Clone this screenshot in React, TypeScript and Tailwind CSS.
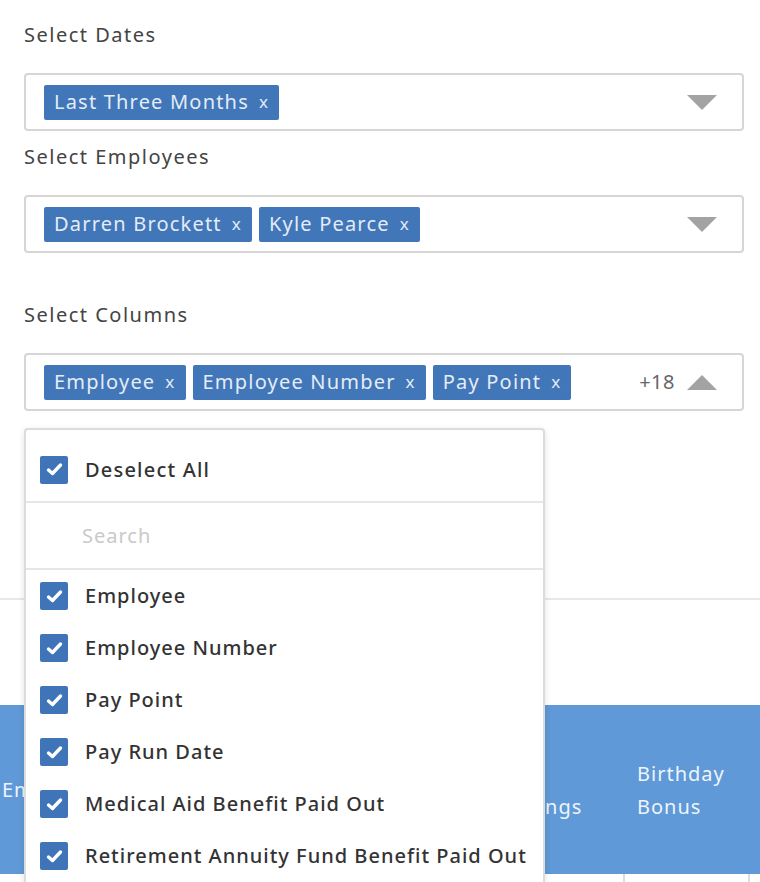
import React from "react";

const font = { fontFamily: '"Noto Sans", "Liberation Sans", sans-serif' };

function Chip({ label }: { label: string }) {
  return (
    <div className="flex h-[35px] shrink-0 items-center gap-[10px] rounded-[2px] bg-[#4176b9] pl-[10px] pr-[10px] text-[20px] tracking-[1.2px] text-[#e4ecf6]">
      <span className="whitespace-nowrap">{label}</span>
      <span className="text-[17px]">x</span>
    </div>
  );
}

function TriDown() {
  return (
    <svg width="30" height="15" viewBox="0 0 30 15">
      <polygon points="0,0 30,0 15,15" fill="#a3a3a3" />
    </svg>
  );
}
function TriUp() {
  return (
    <svg width="30" height="15" viewBox="0 0 30 15">
      <polygon points="0,15 30,15 15,0" fill="#a3a3a3" />
    </svg>
  );
}

function Box({ children, right }: { children: React.ReactNode; right: React.ReactNode }) {
  return (
    <div className="flex h-[58px] items-center rounded-[4px] border-2 border-[#d6d6d6] bg-white pl-[18px] pr-[25px]">
      <div className="flex flex-1 items-center gap-[7px]">{children}</div>
      {right}
    </div>
  );
}

function Check() {
  return (
    <div className="flex h-[28px] w-[28px] shrink-0 items-center justify-center rounded-[2px] bg-[#3f74b8]">
      <svg width="17" height="15" viewBox="0 0 17 15">
        <path d="M2.5 8 L6.5 11.5 L14.5 3" stroke="white" strokeWidth="3.4" fill="none" strokeLinecap="round" strokeLinejoin="round" />
      </svg>
    </div>
  );
}

function Label({ children, className }: { children: React.ReactNode; className: string }) {
  return (
    <div className={`h-[28px] text-[20px] leading-[28px] tracking-[1.5px] text-[#444] ${className}`}>{children}</div>
  );
}

export default function App() {
  const items = [
    "Employee",
    "Employee Number",
    "Pay Point",
    "Pay Run Date",
    "Medical Aid Benefit Paid Out",
    "Retirement Annuity Fund Benefit Paid Out",
  ];
  return (
    <div className="relative h-[882px] w-[760px] overflow-hidden bg-white" style={font}>
      <div className="pl-6 pr-4 pt-[21px]">
        <Label className="">Select Dates</Label>
        <div className="mt-[24px]">
          <Box right={<TriDown />}>
            <Chip label="Last Three Months" />
          </Box>
        </div>
        <Label className="mt-[12px]">Select Employees</Label>
        <div className="mt-[24px]">
          <Box right={<TriDown />}>
            <Chip label="Darren Brockett" />
            <Chip label="Kyle Pearce" />
          </Box>
        </div>
        <Label className="mt-[48px]">Select Columns</Label>
        <div className="mt-[24px]">
          <Box
            right={
              <div className="flex items-center gap-[12px]">
                <span className="text-[20px] tracking-[0.5px] text-[#666]">+18</span>
                <TriUp />
              </div>
            }
          >
            <Chip label="Employee" />
            <Chip label="Employee Number" />
            <Chip label="Pay Point" />
          </Box>
        </div>
      </div>

      <div className="mt-[187px] border-b-2 border-[#e8e8e8]" />

      <div className="mt-[105px] flex text-[20px] leading-[33px] tracking-[1px] text-[#eef4fb]">
        <div className="flex h-[169px] w-[130px] shrink-0 items-center bg-[#5f99d7] pl-[2px]">Employee</div>
        <div className="flex h-[169px] w-[120px] shrink-0 items-center bg-[#5f99d7] px-[12px]">Employee Number</div>
        <div className="flex h-[169px] w-[120px] shrink-0 items-center bg-[#5f99d7] px-[12px]">Pay Point</div>
        <div className="flex h-[169px] w-[120px] shrink-0 items-center bg-[#5f99d7] px-[12px]">Pay Run Date</div>
        <div className="flex h-[169px] w-[135px] shrink-0 items-center bg-[#5f99d7] pl-[2px] pr-[8px]">
          <span>
            Net
            <br />
            Earnings
          </span>
        </div>
        <div className="flex h-[169px] w-[125px] shrink-0 items-center bg-[#5f99d7] px-[12px]">Birthday Bonus</div>
        <div className="flex h-[169px] w-[125px] shrink-0 items-center bg-[#5f99d7] px-[12px]"></div>
      </div>
      <div className="flex h-[20px]">
        <div className="w-[625px] shrink-0 border-r-2 border-[#d5dde6]" />
        <div className="w-[125px] shrink-0 border-r-2 border-[#d5dde6]" />
      </div>

      <div className="absolute left-[24px] top-[428px] w-[521px] rounded-t-[4px] border-2 border-[#dcdcdc] bg-white shadow-[0_2px_6px_rgba(0,0,0,0.12)]">
        <div className="flex h-[73px] items-center gap-[17px] border-b-2 border-[#e6e6e6] pl-[14px] pt-[8px]">
          <Check />
          <span className="text-[20px] font-medium tracking-[1.2px] text-[#333]">Deselect All</span>
        </div>
        <div className="flex h-[67px] items-center border-b-2 border-[#e6e6e6] pl-[56px] text-[20px] tracking-[1px] text-[#c9c9c9]">
          Search
        </div>
        {items.map((it) => (
          <div key={it} className="flex h-[52px] items-center gap-[17px] pl-[14px]">
            <Check />
            <span className="whitespace-nowrap text-[20px] font-medium tracking-[1px] text-[#333]">{it}</span>
          </div>
        ))}
      </div>
    </div>
  );
}
